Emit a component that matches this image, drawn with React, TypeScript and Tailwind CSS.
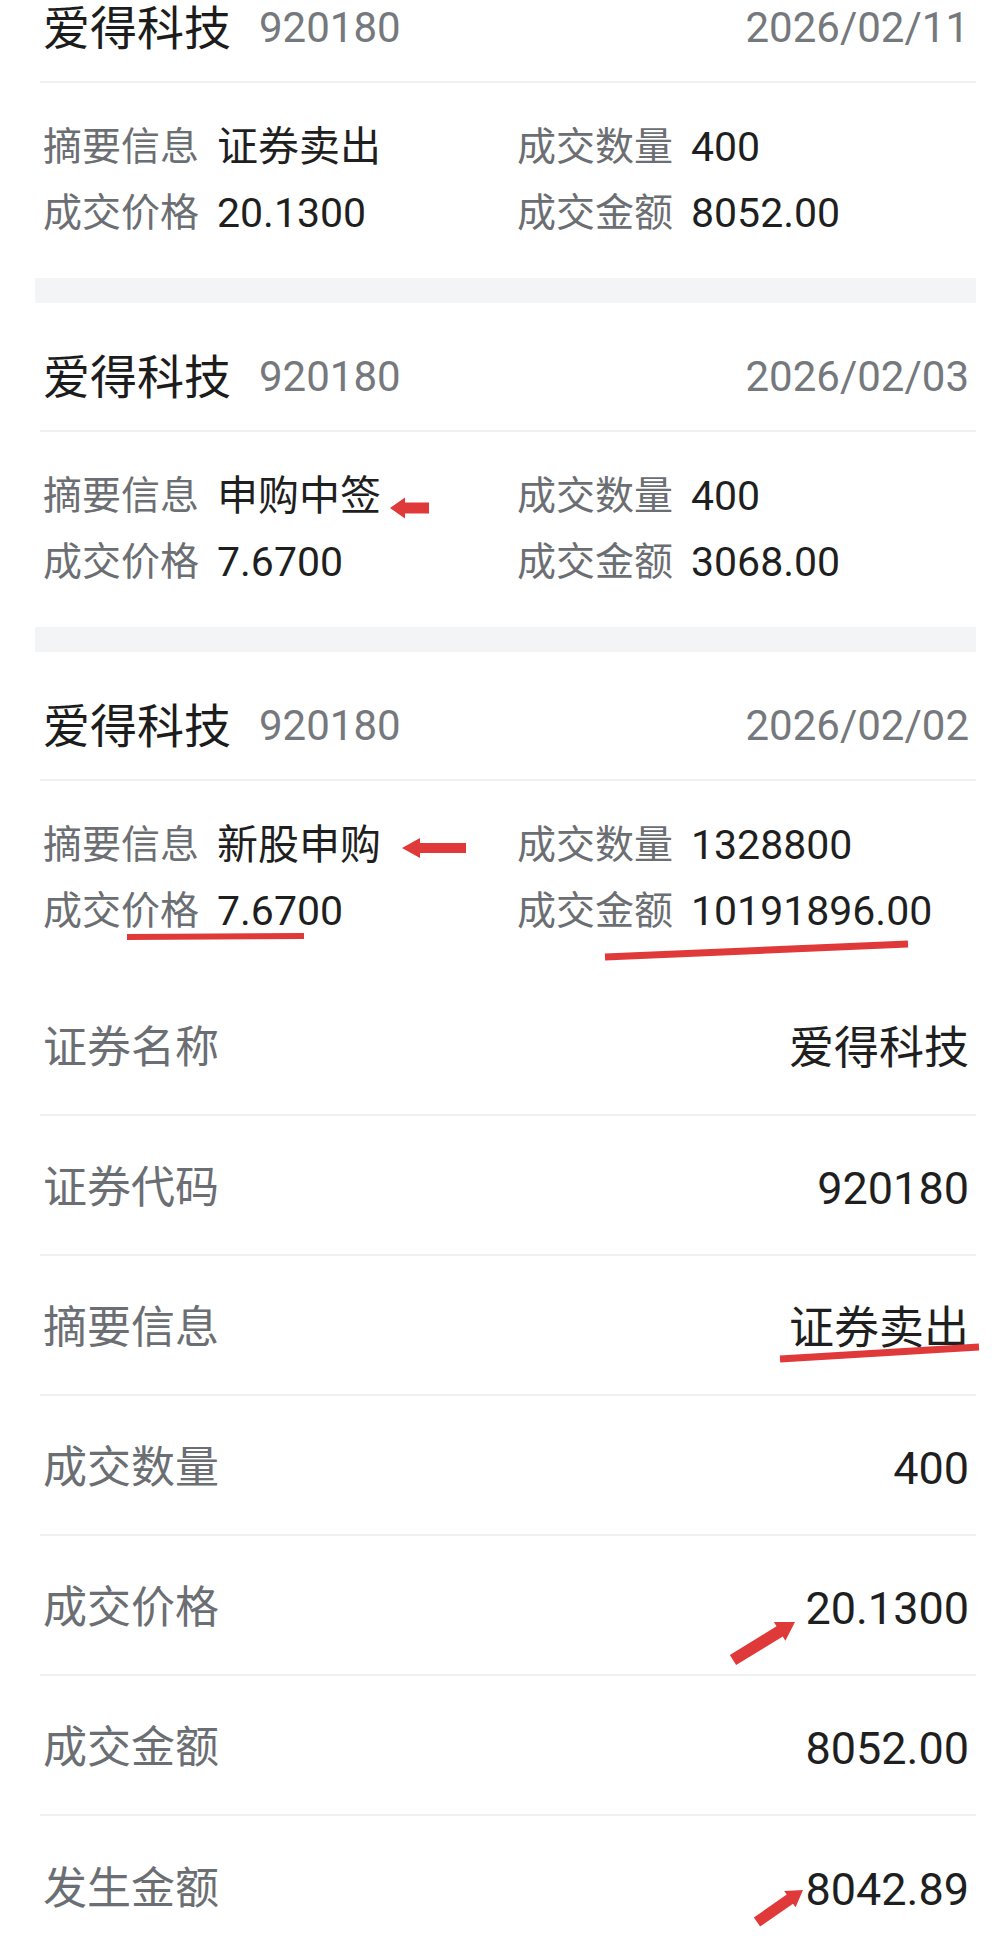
import React from "react";

type Trade = {
  date: string;
  summary: string;
  qty: string;
  price: string;
  amount: string;
};

const trades: Trade[] = [
  { date: "2026/02/11", summary: "证券卖出", qty: "400", price: "20.1300", amount: "8052.00" },
  { date: "2026/02/03", summary: "申购中签", qty: "400", price: "7.6700", amount: "3068.00" },
  { date: "2026/02/02", summary: "新股申购", qty: "1328800", price: "7.6700", amount: "10191896.00" },
];

const details = [
  ["证券名称", "爱得科技"],
  ["证券代码", "920180"],
  ["摘要信息", "证券卖出"],
  ["成交数量", "400"],
  ["成交价格", "20.1300"],
  ["成交金额", "8052.00"],
  ["发生金额", "8042.89"],
];

const Field = ({ label, value }: { label: string; value: string }) => (
  <div className="flex h-[66px] items-center">
    <span className="text-[39px] leading-none text-[#6b6e72]">{label}</span>
    <span className="ml-[18px] text-[41px] leading-none text-[#1f1f1f]">{value}</span>
  </div>
);

const TradeCard = ({ t, first, last }: { t: Trade; first: boolean; last: boolean }) => (
  <div className={first ? "pt-0" : "pt-[46px]"}>
    <div className="flex h-[56px] items-center justify-between pl-[43px] pr-[30px]">
      <div className="flex items-center">
        <span className="text-[47px] leading-none text-[#1c1c1c]">爱得科技</span>
        <span className="ml-[28px] text-[42px] leading-none text-[#75787c]">920180</span>
      </div>
      <span className="text-[42px] leading-none text-[#75787c]">{t.date}</span>
    </div>
    <div className="mt-[25px] ml-[40px] mr-[23px] h-[2px] bg-[#f0f0f0]" />
    <div className={`grid grid-cols-[474px_1fr] pl-[43px] pt-[31px] ${last ? "pb-[32px]" : "pb-[32px]"}`}>
      <Field label="摘要信息" value={t.summary} />
      <Field label="成交数量" value={t.qty} />
      <Field label="成交价格" value={t.price} />
      <Field label="成交金额" value={t.amount} />
    </div>
    {!last && <div className="ml-[35px] mr-[23px] h-[25px] bg-[#f3f4f6]" />}
  </div>
);

// arrow polygon from tail to tip
const arrow = (x1: number, y1: number, x2: number, y2: number, sw: number, hw: number, hl: number) => {
  const len = Math.hypot(x2 - x1, y2 - y1);
  const dx = (x2 - x1) / len;
  const dy = (y2 - y1) / len;
  const px = -dy;
  const py = dx;
  const bx = x2 - dx * hl;
  const by = y2 - dy * hl;
  const pts = [
    [x1 + px * sw, y1 + py * sw],
    [bx + px * sw, by + py * sw],
    [bx + px * hw, by + py * hw],
    [x2, y2],
    [bx - px * hw, by - py * hw],
    [bx - px * sw, by - py * sw],
    [x1 - px * sw, y1 - py * sw],
  ];
  return pts.map((p) => p.join(",")).join(" ");
};

const Marks = () => (
  <svg className="pointer-events-none absolute left-0 top-0" width="999" height="1949" viewBox="0 0 999 1949">
    <g fill="#e0393a">
      <polygon points={arrow(429, 508, 390, 508, 5.5, 10.5, 15)} />
      <polygon points={arrow(466, 848, 402, 848, 5, 10, 18)} />
      <polygon points={arrow(733, 1660, 795, 1622, 6, 11, 18)} />
      <polygon points={arrow(757, 1922, 803, 1890, 5.5, 10, 16)} />
    </g>
    <g stroke="#e0393a" strokeLinecap="butt">
      <line x1="127" y1="937" x2="304" y2="936" strokeWidth="6" />
      <line x1="605" y1="957" x2="908" y2="944" strokeWidth="7" />
      <line x1="780" y1="1359" x2="979" y2="1347" strokeWidth="7" />
    </g>
  </svg>
);

export default function App() {
  return (
    <div className="relative h-[1949px] w-[999px] overflow-hidden bg-white font-[family-name:Roboto,'Noto_Sans_CJK_SC',sans-serif]">
      {trades.map((t, i) => (
        <TradeCard key={t.date} t={t} first={i === 0} last={i === trades.length - 1} />
      ))}
      <div className="ml-[40px] mr-[23px]">
        {details.map(([label, value], i) => (
          <div
            key={label}
            className={`flex h-[140px] items-center justify-between pl-[3px] pr-[7px] pt-[6px] ${
              i < details.length - 1 ? "border-b-2 border-[#f0f0f0]" : ""
            }`}
          >
            <span className="text-[44px] leading-none text-[#6b6e72]">{label}</span>
            <span className="text-[45px] leading-none text-[#1f1f1f]">{value}</span>
          </div>
        ))}
      </div>
      <Marks />
    </div>
  );
}
